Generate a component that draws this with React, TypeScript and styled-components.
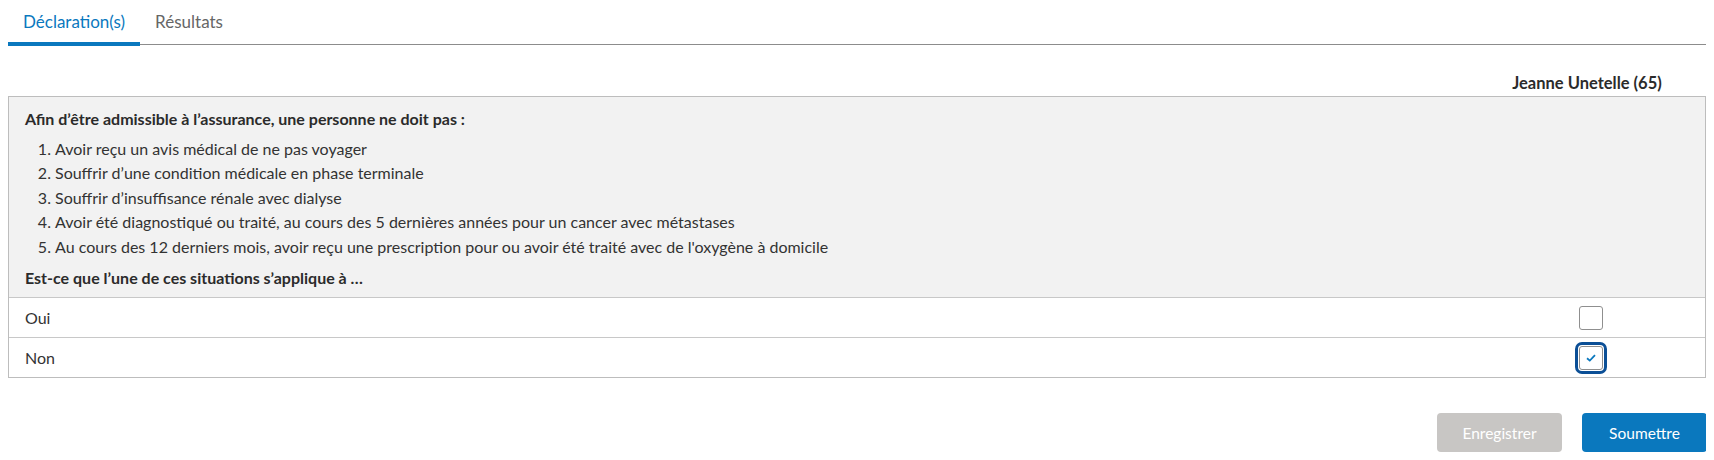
import React from "react";
import styled, { createGlobalStyle } from "styled-components";

const Global = createGlobalStyle`
  body {
    margin: 8px;
    font-family: Lato, "Open Sans", sans-serif;
    color: #333;
    background: #fff;
  }
  * { box-sizing: border-box; }
`;

const TabList = styled.div`
  display: flex;
  align-items: flex-start;
  height: 37px;
  border-bottom: 1px solid #8c8c8c;
`;

const Tab = styled.div<{ $active?: boolean }>`
  height: 38px;
  padding: 3px 15px 0;
  font-size: 17px;
  line-height: 22px;
  color: ${(p) => (p.$active ? "#0a78be" : "#666")};
  border-bottom: 4px solid ${(p) => (p.$active ? "#0a78be" : "transparent")};
  position: relative;
  z-index: 1;
`;

const NameRow = styled.div`
  display: flex;
  justify-content: flex-end;
  margin-top: 28px;
  padding-bottom: 3px;
  padding-right: 5px;
`;

const AnswerCol = styled.div`
  width: 228px;
  display: flex;
  justify-content: center;
  align-items: center;
  font-weight: 700;
  font-size: 16.5px;
  line-height: 20px;
  color: #2b2b2b;
`;

const Card = styled.div`
  border: 1px solid #bdbdbd;
`;

const Question = styled.div`
  background: #f2f2f2;
  padding: 12px 16px 9px;
  font-size: 16px;
  border-bottom: 1px solid #c8c8c8;
`;

const Heading = styled.div`
  font-weight: 700;
  font-size: 16px;
  color: #2b2b2b;
  line-height: 20px;
`;

const List = styled.ol`
  margin: 8px 0 9px;
  padding-left: 30px;
  line-height: 24.4px;
  & li::marker { content: counter(list-item) ". "; }
`;

const Row = styled.div<{ $last?: boolean }>`
  display: flex;
  align-items: center;
  height: ${(p) => (p.$last ? "39px" : "40px")};
  border-bottom: ${(p) => (p.$last ? "none" : "1px solid #c8c8c8")};
  font-size: 16px;
`;

const RowLabel = styled.div`
  flex: 1;
  padding-left: 16px;
`;

const Check = styled.div<{ $focus?: boolean }>`
  width: 24px;
  height: 24px;
  border: 1px solid #8f8f8f;
  border-radius: 3px;
  background: #fff;
  display: flex;
  align-items: center;
  justify-content: center;
  outline: ${(p) => (p.$focus ? "3px solid #0b4f96" : "none")};
  outline-offset: 1px;
`;

const Footer = styled.div`
  display: flex;
  justify-content: flex-end;
  gap: 20px;
  margin-top: 35px;
  margin-right: -1px;
`;

const Button = styled.button<{ $primary?: boolean }>`
  width: 125px;
  height: 39px;
  border: none;
  border-radius: 4px;
  font-family: Lato, sans-serif;
  font-size: 15.5px;
  color: #fff;
  background: ${(p) => (p.$primary ? "#0a78be" : "#c8c6c4")};
`;

const items = [
  "Avoir reçu un avis médical de ne pas voyager",
  "Souffrir d’une condition médicale en phase terminale",
  "Souffrir d’insuffisance rénale avec dialyse",
  "Avoir été diagnostiqué ou traité, au cours des 5 dernières années pour un cancer avec métastases",
  "Au cours des 12 derniers mois, avoir reçu une prescription pour ou avoir été traité avec de l'oxygène à domicile",
];

export default function App() {
  return (
    <>
      <Global />
      <TabList>
        <Tab $active>Déclaration(s)</Tab>
        <Tab>Résultats</Tab>
      </TabList>
      <NameRow>
        <AnswerCol>Jeanne Unetelle (65)</AnswerCol>
      </NameRow>
      <Card>
        <Question>
          <Heading>Afin d’être admissible à l’assurance, une personne ne doit pas :</Heading>
          <List>
            {items.map((t) => (
              <li key={t}>{t}</li>
            ))}
          </List>
          <Heading>Est-ce que l’une de ces situations s’applique à …</Heading>
        </Question>
        <Row>
          <RowLabel>Oui</RowLabel>
          <AnswerCol>
            <Check />
          </AnswerCol>
        </Row>
        <Row $last>
          <RowLabel>Non</RowLabel>
          <AnswerCol>
            <Check $focus>
              <svg width="10" height="8" viewBox="0 0 10 8">
                <path d="M1 4.2 L3.8 6.6 L9 1.2" fill="none" stroke="#0a78be" strokeWidth="1.8" />
              </svg>
            </Check>
          </AnswerCol>
        </Row>
      </Card>
      <Footer>
        <Button>Enregistrer</Button>
        <Button $primary>Soumettre</Button>
      </Footer>
    </>
  );
}
